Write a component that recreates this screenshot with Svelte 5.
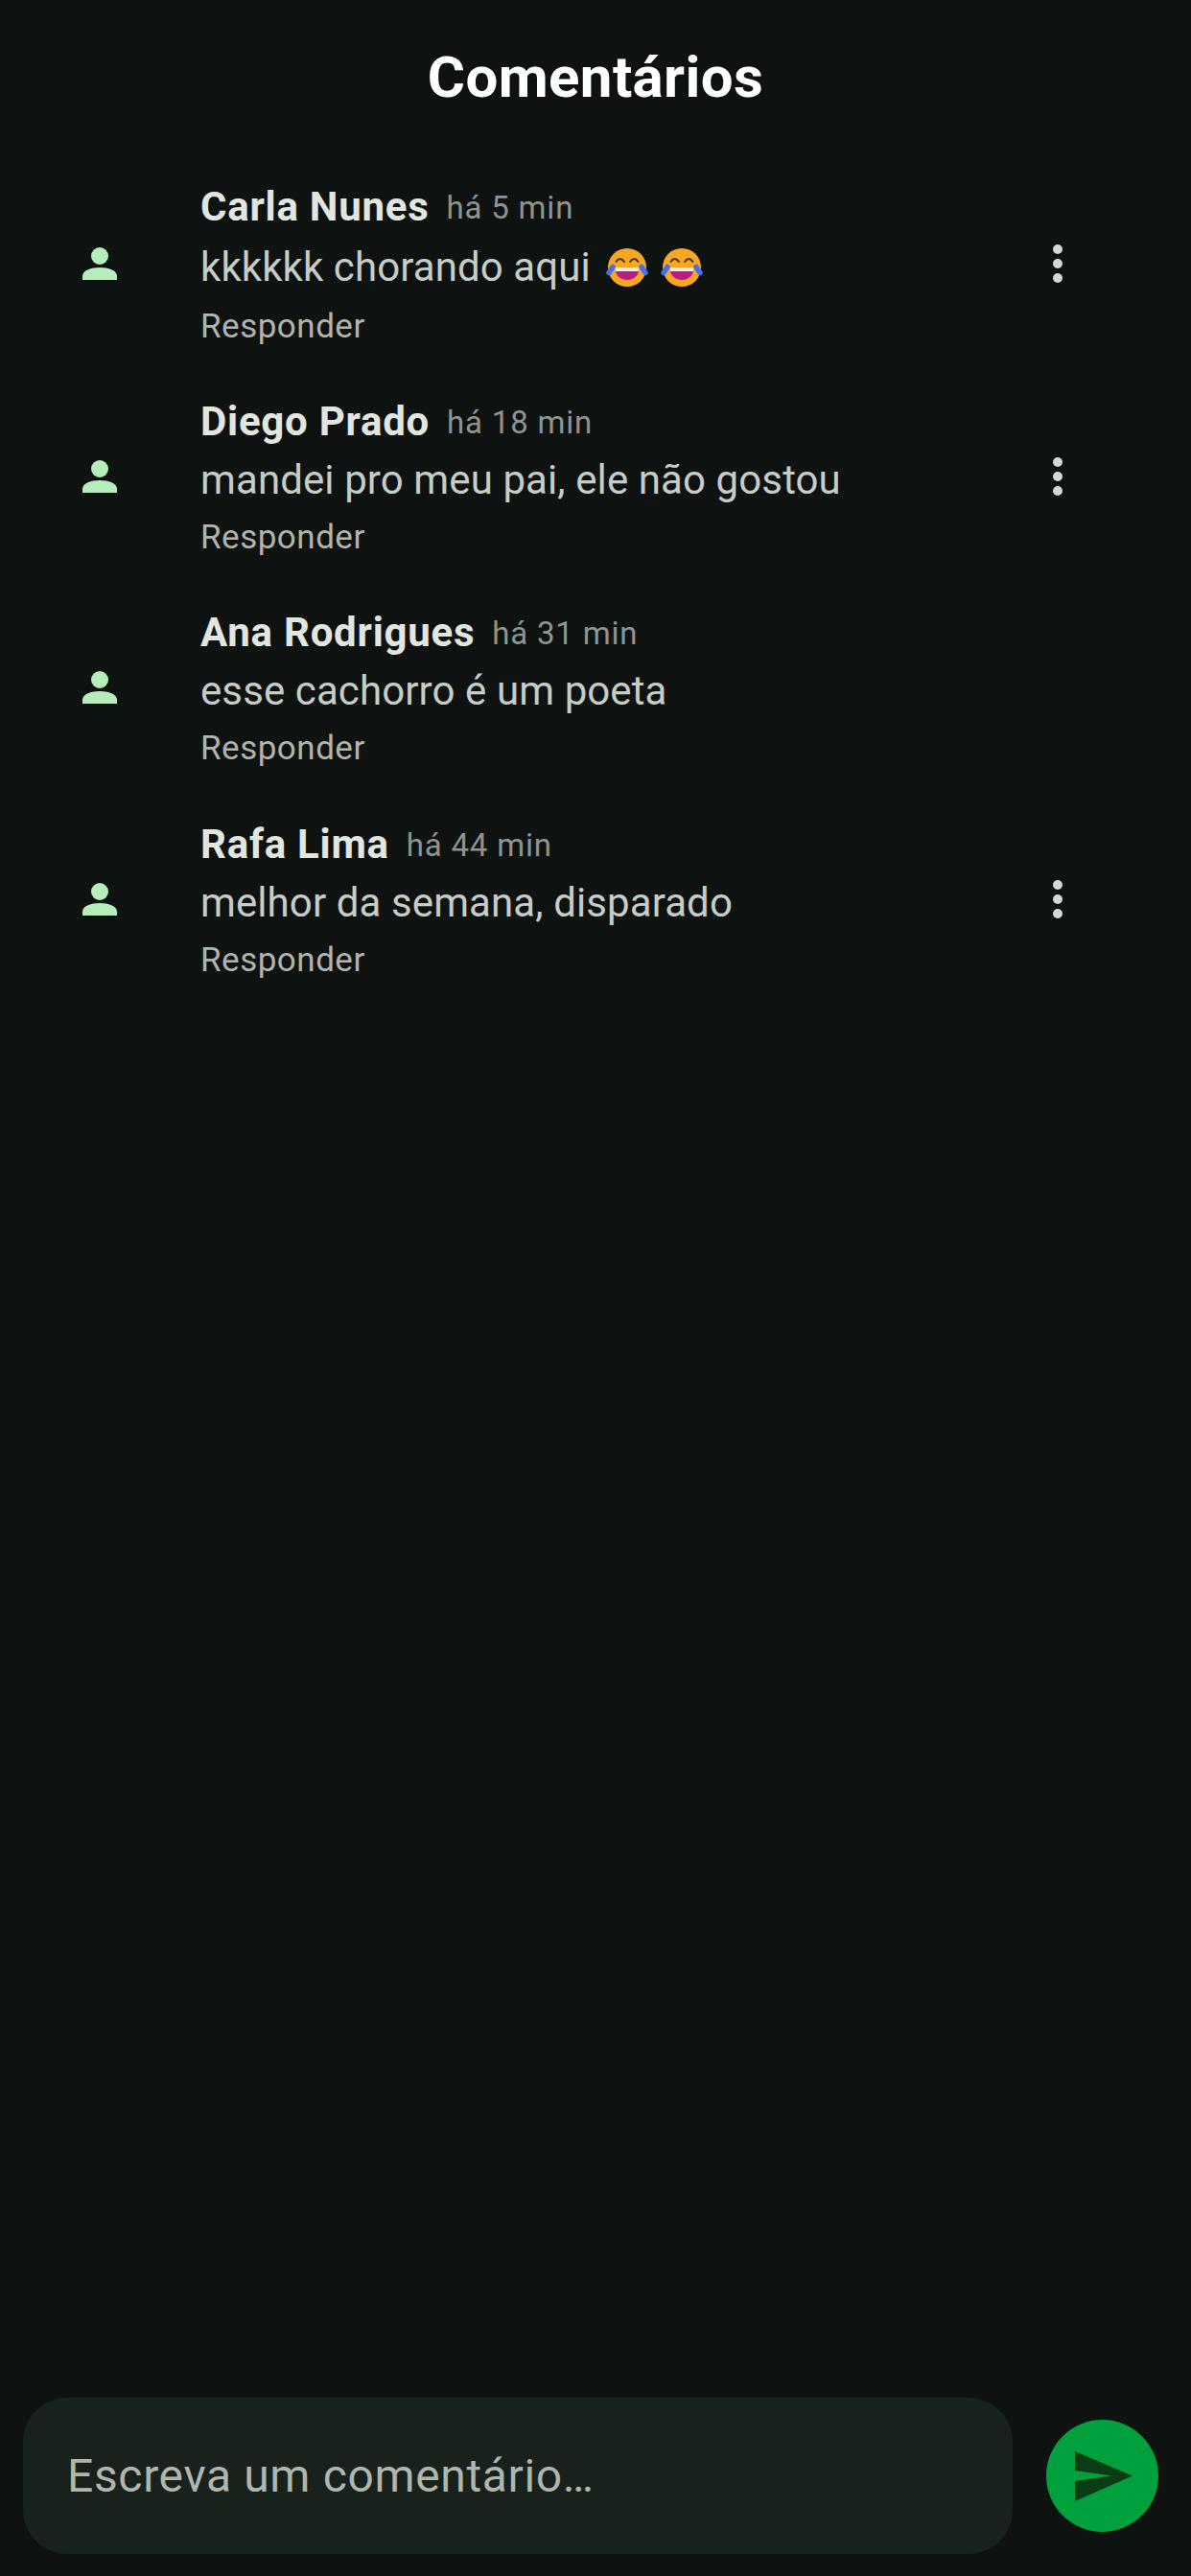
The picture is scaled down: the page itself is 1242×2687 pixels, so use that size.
<script>
  const comments = [
    { name: 'Carla Nunes', time: 'há 5 min', text: 'kkkkkk chorando aqui', emoji: true, menu: true },
    { name: 'Diego Prado', time: 'há 18 min', text: 'mandei pro meu pai, ele não gostou', menu: true },
    { name: 'Ana Rodrigues', time: 'há 31 min', text: 'esse cachorro é um poeta', menu: false },
    { name: 'Rafa Lima', time: 'há 44 min', text: 'melhor da semana, disparado', menu: true }
  ];
</script>

{#snippet face()}
  <svg class="emoji" viewBox="0 0 44 44">
    <circle cx="22" cy="22" r="20" fill="#f7a823" />
    <path d="M10.500 16q4-6 8.500 0M25 16q4.500-6 8.500 0" fill="none" stroke="#4f3212" stroke-width="2" stroke-linecap="round" />
    <path d="M9.500 22h25c0 8-5 13-12.500 13S9.500 30 9.500 22z" fill="#bd1a86" />
    <path d="M9.500 22h25q0 2-.5 4H10q-.5-2-.5-4z" fill="#f1ecec" />
    <path d="M7 21.500l-4 6M37 21.500l4 6" fill="none" stroke="#4a6ee5" stroke-width="5.500" stroke-linecap="round" />
  </svg>
{/snippet}

<div class="screen">
  <h1>Comentários</h1>
  <div class="list">
    {#each comments as c}
      <div class="row">
        <svg class="avatar" viewBox="0 0 36 36">
          <circle cx="18" cy="10" r="9" fill="#b6eebb" />
          <path d="M0 35v-4c0-6 9-9 18-9s18 3 18 9v4z" fill="#b6eebb" />
        </svg>
        <div class="body">
          <div class="head"><span class="name">{c.name}</span><span class="time">{c.time}</span></div>
          <div class="text">{c.text}{#if c.emoji}<span class="faces">{@render face()}{@render face()}</span>{/if}</div>
          <div class="reply">Responder</div>
        </div>
        {#if c.menu}
          <div class="dots"><i></i><i></i><i></i></div>
        {/if}
      </div>
    {/each}
  </div>
  <div class="composer">
    <div class="input">Escreva um comentário…</div>
    <div class="send">
      <svg viewBox="0 0 60 52"><path d="M0 0l60 25.500L0 52V31l38-5.500L0 20z" fill="#0a3d15" /></svg>
    </div>
  </div>
</div>

<style>
  :global(body) { margin: 0; background: #0e1312; }
  .screen {
    height: 2687px;
    display: flex;
    flex-direction: column;
    background: #0e1312;
    font-family: Roboto, "Noto Sans", sans-serif;
    box-sizing: border-box;
  }
  h1 {
    margin: 0;
    padding-top: 47px;
    height: 127px;
    box-sizing: border-box;
    line-height: 68px;
    text-align: center;
    font-size: 60px;
    font-weight: 700;
    letter-spacing: 0.4px;
    color: #fff;
  }
  .list { flex: 1; display: flex; flex-direction: column; padding-top: 37px; }
  .row {
    display: flex;
    align-items: center;
    padding: 20px 0 18.500px 86px;
  }
  .row:first-child { padding: 21px 0 17.500px 86px; }
  .avatar { width: 36px; height: 36px; flex: none; margin: 0 87px 6px 0; }
  .body { flex: 1; display: flex; flex-direction: column; }
  .head { display: flex; align-items: center; gap: 18px; height: 62px; line-height: 62px; }
  .name { font-size: 42px; font-weight: 700; color: #e1e6e0; letter-spacing: 0.75px; }
  .time { font-size: 33px; color: #8f9490; letter-spacing: 0.8px; margin-top: 2px; }
  .text { font-size: 42px; line-height: 60px; color: #c6ccc6; display: flex; align-items: center; letter-spacing: 0.1px; }
  .faces { display: flex; gap: 13px; margin-left: 16px; }
  .emoji { width: 44px; height: 44px; display: block; margin: 10px 0; }
  .reply { font-size: 35px; line-height: 60px; color: #afb4af; letter-spacing: 0.5px; }
  .dots { display: flex; flex-direction: column; gap: 5px; margin: 0 134px 6px 0; }
  .dots i { width: 10px; height: 10px; border-radius: 50%; background: #d5d8d4; display: block; }
  .composer {
    display: flex;
    align-items: center;
    padding: 0 34px 23px 24px;
    gap: 35px;
  }
  .input {
    flex: 1;
    height: 163px;
    border-radius: 46px;
    background: #19211c;
    display: flex;
    align-items: center;
    padding-left: 46px;
    font-size: 48px;
    letter-spacing: 0.65px;
    color: #aeb6ae;
  }
  .send {
    width: 117px;
    height: 117px;
    border-radius: 50%;
    background: #00a03c;
    display: flex;
    align-items: center;
    justify-content: center;
    flex: none;
  }
  .send svg { width: 60px; height: 52px; display: block; margin-left: 2px; }
</style>
